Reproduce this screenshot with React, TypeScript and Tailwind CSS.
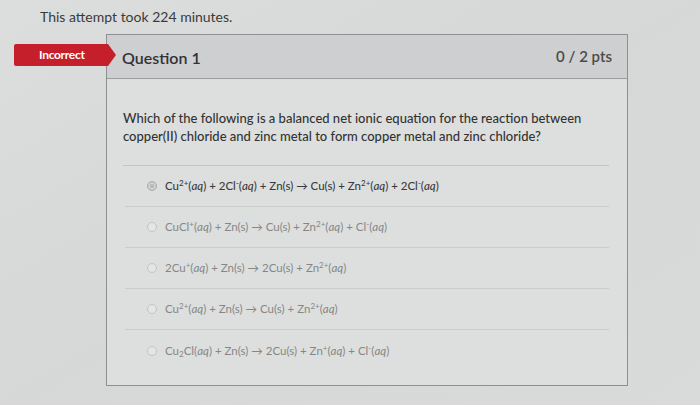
import React from 'react';

const Sup = ({ children }: { children: React.ReactNode }) => (
  <span className="text-[8px] relative -top-[4px] leading-none">{children}</span>
);
const Sub = ({ children }: { children: React.ReactNode }) => (
  <span className="text-[8px] relative top-[2px] leading-none">{children}</span>
);
const Aq = () => <i>aq</i>;

const answers: React.ReactNode[] = [
  <>Cu<Sup>2+</Sup>(<Aq />) + 2Cl<Sup>-</Sup>(<Aq />) + Zn(s) → Cu(s) + Zn<Sup>2+</Sup>(<Aq />) + 2Cl<Sup>-</Sup>(<Aq />)</>,
  <>CuCl<Sup>+</Sup>(<Aq />) + Zn(s) → Cu(s) + Zn<Sup>2+</Sup>(<Aq />) + Cl<Sup>-</Sup>(<Aq />)</>,
  <>2Cu<Sup>+</Sup>(<Aq />) + Zn(s) → 2Cu(s) + Zn<Sup>2+</Sup>(<Aq />)</>,
  <>Cu<Sup>2+</Sup>(<Aq />) + Zn(s) → Cu(s) + Zn<Sup>2+</Sup>(<Aq />)</>,
  <>Cu<Sub>2</Sub>Cl(<Aq />) + Zn(s) → 2Cu(s) + Zn<Sup>+</Sup>(<Aq />) + Cl<Sup>-</Sup>(<Aq />)</>,
];

export default function App() {
  return (
    <div
      className="w-[700px] h-[405px] overflow-hidden bg-gradient-to-br from-[#dcdedd] via-[#d6d8d7] to-[#d9dbda] text-[#333]"
      style={{ fontFamily: 'Lato, "Open Sans", sans-serif' }}
    >
      <div className="pl-[40px] pt-[6px] h-[34px] text-[14px] text-[#3a3a3a]">This attempt took 224 minutes.</div>

      <div className="flex">
        {/* status tag */}
        <div className="w-[106px] pl-[14px] pt-[10px]">
          <div className="relative h-[22px] w-[94px] bg-[#c61f2c] rounded-l-[2px] flex items-center pl-[25px]">
            <span className="text-white text-[12px] font-bold tracking-tight">Incorrect</span>
            <div className="absolute -right-[8px] top-0 w-0 h-0 border-y-[11px] border-y-transparent border-l-[8px] border-l-[#c61f2c]" />
          </div>
        </div>

        {/* question card */}
        <div className="w-[522px] h-[352px] border border-[#8e9092] bg-[#dddfde] flex flex-col">
          <div className="h-[44px] shrink-0 bg-[#cdcfd1] border-b border-[#9a9c9e] flex items-center justify-between pl-[15px] pr-[15px]">
            <span className="text-[16px] font-semibold text-[#333] pt-[3px]">Question 1</span>
            <span className="text-[15px] font-semibold text-[#4a4a4a]">0 / 2 pts</span>
          </div>

          <div className="pt-[30px] pl-[16px] pr-[18px]">
            <p className="text-[13px] leading-[18px] font-medium text-[#333] pb-[20px] border-b border-[#c4c6c5] whitespace-nowrap">
              Which of the following is a balanced net ionic equation for the reaction between
              <br />
              copper(II) chloride and zinc metal to form copper metal and zinc chloride?
            </p>

            <div className="pl-[2px]">
              {answers.map((a, i) => (
                <div
                  key={i}
                  className={`h-[41px] flex items-center pl-[22px] ${i < answers.length - 1 ? 'border-b border-[#cbcdcc]' : ''}`}
                >
                  <span
                    className={`w-[10px] h-[10px] rounded-full shrink-0 border ${
                      i === 0 ? 'border-[#a9abaa] bg-[#b4b6b5] shadow-[inset_0_0_0_2px_#d0d2d1]' : 'border-[#c3c5c4] bg-[#e4e6e5]'
                    }`}
                  />
                  <span
                    className={`ml-[8px] text-[11.5px] ${i === 0 ? 'text-[#3c3c3c] font-medium' : 'text-[#858787]'}`}
                  >
                    {a}
                  </span>
                </div>
              ))}
            </div>
          </div>
        </div>
      </div>
    </div>
  );
}
